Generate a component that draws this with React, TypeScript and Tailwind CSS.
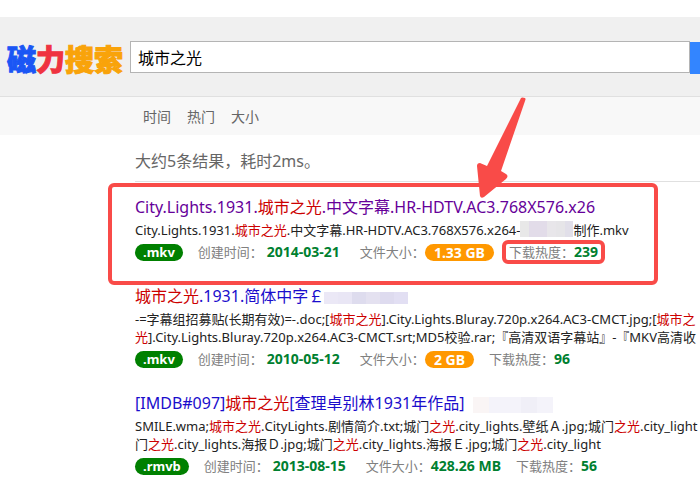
import type { ReactNode } from 'react';

function Hit({ children }: { children: ReactNode }) {
  return <em className="not-italic text-[#cc0000]">{children}</em>;
}

function Badge({ tone, children }: { tone: 'green' | 'orange'; children: ReactNode }) {
  return (
    <span
      className={
        'rounded-full leading-[17px] font-bold text-white ' +
        (tone === 'green' ? 'bg-[#008000] px-2 text-[13px]' : 'bg-[#ff9800] px-[9px] text-[14px]')
      }
    >
      {children}
    </span>
  );
}

function Value({ children }: { children: ReactNode }) {
  return <b className="text-[14px] font-bold text-[#008030]">{children}</b>;
}

function Mosaic({ colors, className }: { colors: string[]; className: string }) {
  return (
    <span aria-hidden="true" className={'inline-flex overflow-hidden ' + className}>
      {colors.map((c, i) => (
        <span key={i} className="flex-1" style={{ backgroundColor: c }} />
      ))}
    </span>
  );
}

type ResultProps = {
  title: ReactNode;
  visited?: boolean;
  files: ReactNode;
  type: string;
  date: string;
  size: ReactNode;
  heat: string;
  marked?: boolean;
};

function Result({ title, visited, files, type, date, size, heat, marked }: ResultProps) {
  return (
    <article className="relative pb-[19px] whitespace-nowrap">
      <h3 className="mb-0.5 text-[16px] leading-6 font-normal">
        <a href="#" className={visited ? 'text-[#660099]' : 'text-[#1a0dcc]'}>
          {title}
        </a>
      </h3>
      <p className="text-[13px] leading-[18px] text-[#222]">{files}</p>
      <div className="flex h-[26px] items-center text-[13px] leading-[18px] text-[#808080]">
        <Badge tone="green">{type}</Badge>
        <span className="ml-[15px]">创建时间：</span>
        <span className="ml-1">
          <Value>{date}</Value>
        </span>
        <span className="ml-5">文件大小：</span>
        {size}
        <span className="relative ml-[15px]">
          下载热度：<Value>{heat}</Value>
          {marked && (
            <span className="absolute -inset-x-[7px] -inset-y-[3px] rounded-md border-4 border-[#f94b48]" />
          )}
        </span>
      </div>
      {marked && (
        <>
          <span className="absolute top-[-12px] left-[-27px] h-[102px] w-[550px] rounded-md border-4 border-[#f94b48]" />
          <svg
            aria-hidden="true"
            className="absolute top-[-99px] left-[341px]"
            width="52"
            height="104"
            viewBox="0 0 52 104"
            fill="#f94b48"
          >
            <path d="M45 2 Q46 1 49 2 Q50 3 49 5 L25 75 L30 78 Q33 80 30 83 L8 101 Q5 103 4 100 L1 70 Q1 67 4 67 L11 70 Z" />
          </svg>
        </>
      )}
    </article>
  );
}

export default function App() {
  return (
    <div className="w-full overflow-hidden bg-white pt-[17px] font-['Noto_Sans','Noto_Sans_CJK_SC',sans-serif]">
      <header className="flex h-20 items-center border-b border-[#e0e0e0] bg-[#f0f0f0] pt-0.5 pl-[7px]">
        <a
          href="#"
          className="flex w-[123px] shrink-0 font-['Noto_Sans_CJK_SC',sans-serif] text-[29px] leading-8 font-black"
        >
          <span className="text-[#1a56f5] [-webkit-text-stroke:1px]">磁</span>
          <span className="text-[#ef3340] [-webkit-text-stroke:1px]">力</span>
          <span className="text-[#f9a30a] [-webkit-text-stroke:1px]">搜索</span>
        </a>
        <form className="flex min-w-0 flex-1">
          <input
            type="text"
            aria-label="关键词"
            defaultValue="城市之光"
            className="h-8 min-w-0 flex-1 border border-[#b4b4b4] bg-white px-[7px] text-[16px] text-black outline-none"
          />
          <button type="button" aria-label="搜索" className="mt-px -mr-[90px] h-8 w-[100px] bg-[#3385ff]" />
        </form>
      </header>
      <nav className="flex h-[38px] items-center gap-4 bg-[#f8f8f8] pl-[143px] text-[14px] text-[#666]">
        <a href="#">时间</a>
        <a href="#">热门</a>
        <a href="#">大小</a>
      </nav>
      <main className="pl-[135px]">
        <p className="border-b border-[#e0e0e0] pt-3.5 pb-2 text-[16px] leading-6 text-[#666]">
          大约5条结果，耗时2ms。
        </p>
        <div className="pt-[13px]">
          <Result
            marked
            visited
            title={
              <>
                City.Lights.1931.<Hit>城市之光</Hit>.中文字幕.HR-HDTV.AC3.768X576.x26
              </>
            }
            files={
              <>
                City.Lights.1931.<Hit>城市之光</Hit>.中文字幕.HR-HDTV.AC3.768X576.x264-
                <Mosaic className="h-4 w-[53px] align-top" colors={['#e8e8e8', '#e2dce9', '#e2dce9', '#e8e6ea', '#e6e5e8', '#e1dfe9']} />
                制作.mkv
              </>
            }
            type=".mkv"
            date="2014-03-21"
            size={<Badge tone="orange">1.33 GB</Badge>}
            heat="239"
          />
          <Result
            title={
              <>
                <Hit>城市之光</Hit>.1931.简体中字￡
                <Mosaic className="h-3 w-[84px] align-middle" colors={['#ebe8f6', '#e9e6f5', '#dedcee', '#e4e1f0', '#dedbef', '#e2dff3']} />
              </>
            }
            files={
              <>
                -=字幕组招募贴(长期有效)=-.doc;[<Hit>城市之光</Hit>].City.Lights.Bluray.720p.x264.AC3-CMCT.jpg;[<Hit>城市之</Hit>
                <br />
                <Hit>光</Hit>].City.Lights.Bluray.720p.x264.AC3-CMCT.srt;MD5校验.rar;『高清双语字幕站』-『MKV高清收
              </>
            }
            type=".mkv"
            date="2010-05-12"
            size={<Badge tone="orange">2 GB</Badge>}
            heat="96"
          />
          <Result
            title={
              <>
                [IMDB#097]<Hit>城市之光</Hit>[查理卓别林1931年作品]
                <Mosaic className="ml-2 h-4 w-20 align-middle" colors={['#faf5f5', '#f4f3fa', '#f4f3fa', '#f0eff7', '#f4f3fa']} />
              </>
            }
            files={
              <>
                SMILE.wma;<Hit>城市之光</Hit>.CityLights.剧情简介.txt;城门<Hit>之光</Hit>.city_lights.壁纸Ａ.jpg;城门<Hit>之光</Hit>.city_light
                <br />门<Hit>之光</Hit>.city_lights.海报Ｄ.jpg;城门<Hit>之光</Hit>.city_lights.海报Ｅ.jpg;城门<Hit>之光</Hit>.city_light
              </>
            }
            type=".rmvb"
            date="2013-08-15"
            size={<Value>428.26 MB</Value>}
            heat="56"
          />
        </div>
      </main>
    </div>
  );
}
